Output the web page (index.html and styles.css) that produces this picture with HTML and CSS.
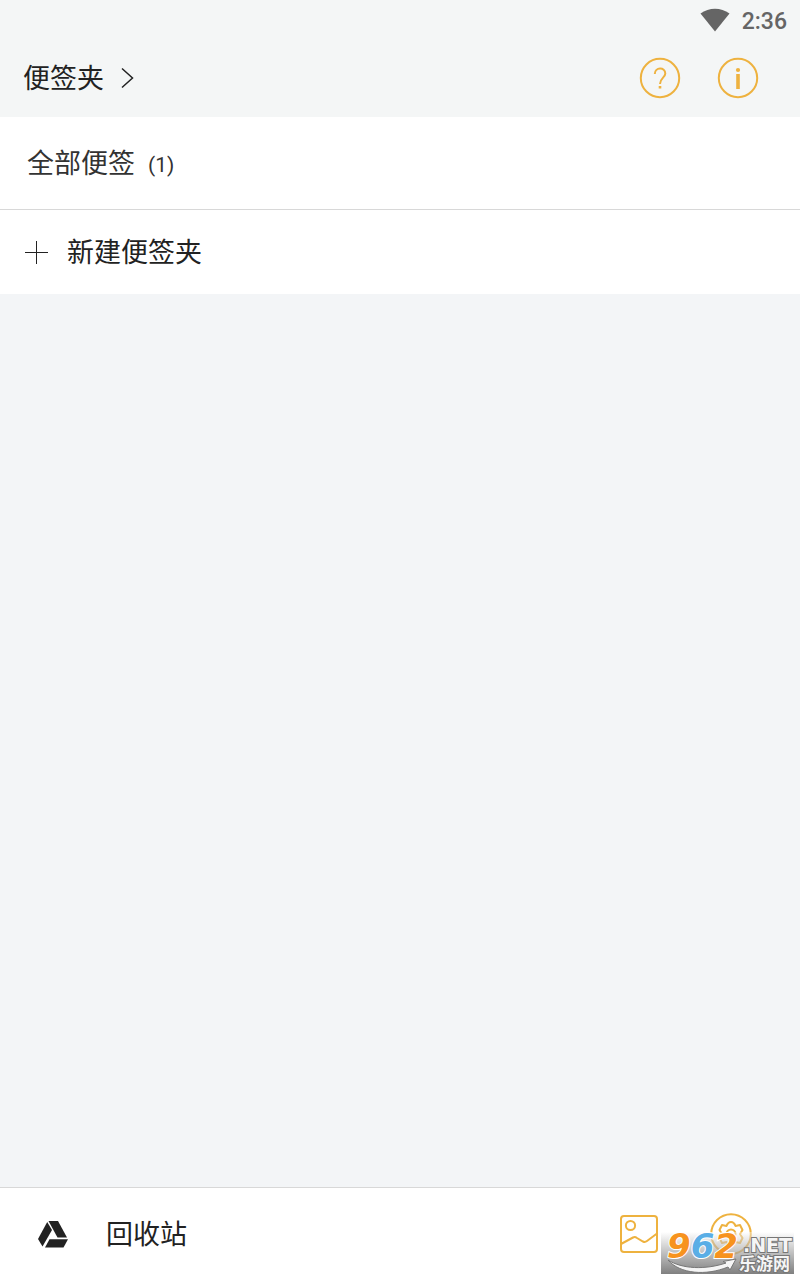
FILE: index.html
```html
<!DOCTYPE html>
<html lang="zh-CN">
<head>
    <meta charset="utf-8">
    <meta name="viewport" content="width=device-width, initial-scale=1">
    <title>便签夹</title>
    <link rel="stylesheet" href="styles.css">
</head>
<body>
    <header class="top">
        <div class="status-bar">
            <svg class="wifi" viewBox="0 0 30 24" width="30" height="24">
                <path d="M0.5 5.5C9-1 21-1 29.5 5.5L15 23.5Z" fill="#656565"/>
            </svg>
            <span class="clock">2:36</span>
        </div>
        <div class="title-bar">
            <button class="title">
                <span class="label">便签夹</span>
                <svg viewBox="0 0 14 22" width="14" height="22">
                    <path d="M2 1.500L12.500 11L2 20.500" fill="none" stroke="#222" stroke-width="1.500"/>
                </svg>
            </button>
            <div class="top-actions">
                <button class="icon-btn" aria-label="帮助">
                    <svg viewBox="0 0 42 42" width="42" height="42" fill="none" stroke="#eeb23f" stroke-width="2">
                        <circle cx="21" cy="21" r="19.200"/>
                        <path d="M15.800 17C15.800 9.800 26.300 9.800 26.300 16.500C26.300 20.500 21 21 21 27"/>
                        <path d="M21 29V31.500" stroke-width="2.600"/>
                    </svg>
                </button>
                <button class="icon-btn" aria-label="关于">
                    <svg viewBox="0 0 42 42" width="42" height="42" fill="none" stroke="#eeb23f" stroke-width="2">
                        <circle cx="21" cy="21" r="19.200"/>
                        <circle cx="21" cy="13" r="2.100" fill="#eeb23f" stroke="none"/>
                        <path d="M21 17V32" stroke-width="3.600"/>
                    </svg>
                </button>
            </div>
        </div>
    </header>

    <main class="folders">
        <button class="row row-all">
            <span class="label">全部便签</span>
            <span class="label count">(1)</span>
        </button>
        <button class="row row-new">
            <svg viewBox="0 0 25 25" width="25" height="25">
                <path d="M12.500 1V24M1 12.500H24" stroke="#222" stroke-width="1"/>
            </svg>
            <span class="label">新建便签夹</span>
        </button>
    </main>

    <footer class="bottom">
        <button class="trash">
            <svg viewBox="0 0 30 27" width="30" height="27" fill="#222">
                <path d="M9.200 1L14 9L4.500 25.500L0 18Z"/>
                <path d="M10.500 0H20L29 16.500H19.500Z"/>
                <path d="M11.500 18.200H30L25.500 26.500H7Z"/>
            </svg>
            <span class="label">回收站</span>
        </button>
        <div class="bottom-actions">
            <button class="icon-btn" aria-label="图片">
                <svg viewBox="0 0 40 40" width="40" height="40" fill="none" stroke="#eeb23f" stroke-width="2">
                    <rect x="2" y="2" width="36" height="36" rx="3"/>
                    <circle cx="11.500" cy="11.500" r="4.600"/>
                    <path d="M2 30L14 23.500Q16 22.500 18 24L24 27.500Q26 28.500 28 27L38 19.500"/>
                </svg>
            </button>
            <button class="icon-btn" aria-label="设置">
                <svg viewBox="0 0 42 42" width="42" height="42" fill="none" stroke="#eeb23f" stroke-width="2">
                    <circle cx="21" cy="21" r="19.800"/>
                    <path d="M16.500 13Q18 9 21 9Q24 9 25.500 13L30 12L32.500 17L30 21L32.500 25L30 30L25.500 29Q24 33 21 33Q18 33 16.500 29L12 30L9.500 25L12 21L9.500 17L12 12Z" stroke-linejoin="round"/>
                    <circle cx="21" cy="21" r="4.500"/>
                </svg>
            </button>
        </div>
        <div class="watermark">
            <span class="mark-number">9<span class="mark-blue">6</span>2</span>
            <svg class="swoosh" viewBox="0 0 70 16" width="70" height="16">
                <path d="M1 2C15 11 38 12 59 5L56 3.500L69 1L63 12L61 9C39 18 13 16 1 2Z" fill="#f5f5f5" stroke="#777" stroke-width="1"/>
            </svg>
            <span class="mark-net">.NET</span>
            <span class="mark-name">乐游网</span>
        </div>
    </footer>
</body>
</html>
```
FILE: styles.css
```css
* {
    box-sizing: border-box;
}

body {
    margin: 0;
    min-height: 100vh;
    display: flex;
    flex-direction: column;
    background: #f3f5f7;
    color: #222;
    font-family: Roboto, "Noto Sans CJK SC", sans-serif;
    font-size: 27px;
    line-height: 40px;
}

button {
    padding: 0;
    border: none;
    background: none;
    color: inherit;
    font: inherit;
    text-align: left;
    cursor: pointer;
}

svg {
    display: block;
}

.label {
    padding-top: 2px;
}

.top {
    background: #f4f6f6;
}

.status-bar {
    display: flex;
    align-items: center;
    justify-content: flex-end;
    gap: 12px;
    height: 40px;
    padding-right: 13px;
}

.clock {
    padding-top: 3px;
    color: #656565;
    font-size: 23px;
    font-weight: 500;
}

.title-bar {
    display: flex;
    align-items: center;
    justify-content: space-between;
    height: 77px;
    padding: 0 41px 1px 23px;
}

.title {
    display: flex;
    align-items: center;
    gap: 16px;
}

.top-actions {
    display: flex;
    gap: 36px;
}

.folders {
    background: #fff;
}

.row {
    display: flex;
    align-items: center;
    width: 100%;
}

.row-all {
    height: 93px;
    padding-left: 27px;
    gap: 13px;
    border-bottom: 1px solid #d8d8d8;
    color: #333;
}

.count {
    padding-top: 4px;
    font-size: 21px;
}

.row-new {
    height: 84px;
    padding-left: 24px;
    gap: 18px;
}

.bottom {
    position: relative;
    display: flex;
    align-items: center;
    justify-content: space-between;
    height: 93px;
    margin-top: auto;
    padding: 0 48px 0 38px;
    border-top: 1px solid #d8d8d8;
    background: #fff;
}

.trash {
    display: flex;
    align-items: center;
    gap: 38px;
}

.bottom-actions {
    display: flex;
    align-items: center;
    gap: 51px;
}

/* site mark, lies over the settings button */
.watermark {
    position: absolute;
    right: 6px;
    bottom: 6px;
    width: 133px;
    height: 42px;
    background: linear-gradient(rgba(255, 255, 255, 0.4), #808080);
    color: #f5f5f5;
    font-weight: bold;
    white-space: nowrap;
}

.mark-number,
.mark-net,
.mark-name,
.swoosh {
    position: absolute;
}

.mark-number {
    left: 6px;
    top: -2px;
    color: #f7931e;
    font-family: "DejaVu Sans", sans-serif;
    font-size: 34px;
    font-style: italic;
    line-height: 32px;
    -webkit-text-stroke: 2px #fff;
    paint-order: stroke fill;
}

.mark-blue {
    color: #5aaee6;
}

.swoosh {
    left: 6px;
    top: 26px;
}

.mark-net {
    right: 2px;
    top: 3px;
    font-family: "DejaVu Sans", sans-serif;
    font-size: 19px;
    line-height: 20px;
    -webkit-text-stroke: 2px #777;
    paint-order: stroke fill;
}

.mark-name {
    right: 4px;
    top: 22px;
    font-size: 17px;
    line-height: 20px;
    -webkit-text-stroke: 2px #777;
    paint-order: stroke fill;
}
```
